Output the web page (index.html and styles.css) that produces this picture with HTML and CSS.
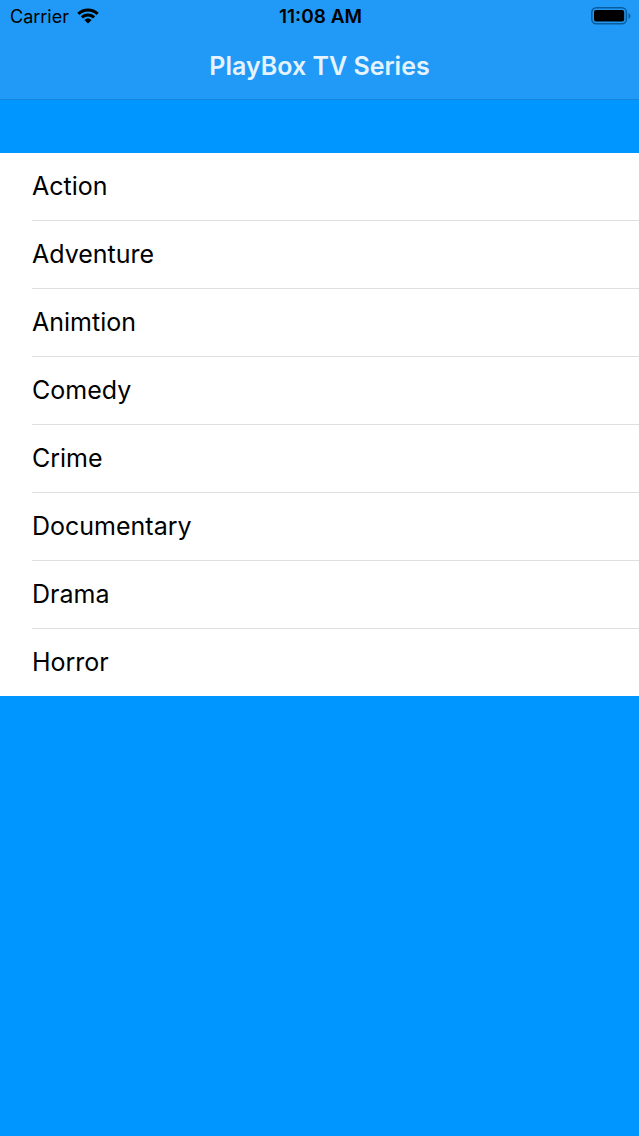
FILE: index.html
```html
<!DOCTYPE html>
<html lang="en">
<head>
<meta charset="utf-8">
<meta name="viewport" content="width=device-width, initial-scale=1">
<title>PlayBox TV Series</title>
<link rel="stylesheet" href="styles.css">
</head>
<body>
<header class="top">
  <div class="status">
    <div class="carrier">
      <span>Carrier</span>
      <svg class="wifi" viewBox="0 0 22 16" aria-hidden="true">
        <path d="M11 0.5C15.1 0.5 18.9 2.1 21.7 4.7L19.6 6.9C17.3 4.8 14.3 3.5 11 3.5S4.7 4.8 2.4 6.9L0.3 4.7C3.1 2.1 6.9 0.5 11 0.5Z"/>
        <path d="M11 5.5C13.8 5.5 16.3 6.6 18.2 8.3L16 10.5C14.7 9.3 12.9 8.5 11 8.5S7.3 9.3 6 10.5L3.8 8.3C5.7 6.6 8.2 5.5 11 5.5Z"/>
        <path d="M11 10.4C12.4 10.4 13.7 11 14.6 11.9L11 15.5L7.4 11.9C8.3 11 9.6 10.4 11 10.4Z"/>
      </svg>
    </div>
    <time class="clock">11:08 AM</time>
    <svg class="battery" viewBox="0 0 40 18" role="img" aria-label="Battery full">
      <rect class="shell" x="0.8" y="0.8" width="34.6" height="16" rx="4.5"/>
      <rect x="3" y="3" width="30.2" height="11.6" rx="2"/>
      <path class="cap" d="M37.5 6Q39.5 7 39.5 9T37.5 12Z"/>
    </svg>
  </div>
  <h1 class="title">PlayBox TV Series</h1>
</header>
<main>
  <ul class="list">
    <li><button class="row" type="button"><span>Action</span></button></li>
    <li><button class="row" type="button"><span>Adventure</span></button></li>
    <li><button class="row" type="button"><span>Animtion</span></button></li>
    <li><button class="row" type="button"><span>Comedy</span></button></li>
    <li><button class="row" type="button"><span>Crime</span></button></li>
    <li><button class="row" type="button"><span>Documentary</span></button></li>
    <li><button class="row" type="button"><span>Drama</span></button></li>
    <li><button class="row" type="button"><span>Horror</span></button></li>
  </ul>
</main>
</body>
</html>
```

FILE: styles.css
```css
* { box-sizing: border-box; }
body {
  margin: 0;
  min-height: 100vh;
  background: #0096ff;
  color: #000;
  font-family: Inter, "Liberation Sans", sans-serif;
}
.top {
  background: #209af6;
  border-bottom: 1px solid #1487dc;
}
.status {
  display: grid;
  grid-template-columns: 1fr auto 1fr;
  align-items: center;
  height: 32px;
  padding: 0 8px 0 10px;
  font-size: 18px;
}
.carrier {
  display: flex;
  align-items: center;
  gap: 8px;
}
.wifi { width: 22px; height: 16px; }
.clock {
  font-size: 19px;
  font-weight: 600;
}
.battery { width: 40px; height: 18px; justify-self: end; }
.shell { fill: none; stroke: #0b5c9c; stroke-width: 1.5; }
.cap { fill: #0b5c9c; }
.title {
  margin: 0;
  padding: 17px 0 16px;
  line-height: 34px;
  text-align: center;
  font-size: 25px;
  font-weight: 600;
  color: #e4f3fe;
}
.list {
  margin: 53px 0 0;
  padding: 0;
  list-style: none;
  background: #fff;
}
.row {
  display: block;
  width: 100%;
  padding: 0 0 0 32px;
  border: 0;
  background: none;
  color: inherit;
  font: inherit;
  font-size: 25px;
  line-height: 67px;
  text-align: left;
}
.row span {
  display: block;
  border-bottom: 1px solid #dfdfe2;
}
li:last-child span { border-bottom: 0; }
```
